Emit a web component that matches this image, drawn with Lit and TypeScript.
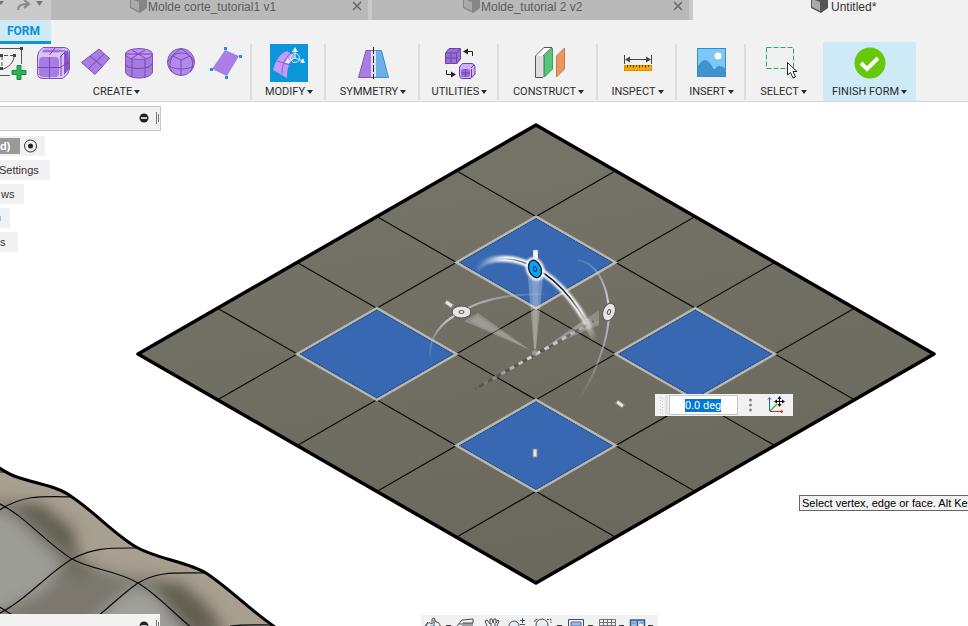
import { LitElement, html, svg, css } from "lit";
import { customElement } from "lit/decorators.js";

const ORIGIN = [536, 125];
const at = (a: number, b: number) =>
  `${(ORIGIN[0] + (a - b) * 79.6).toFixed(1)},${(ORIGIN[1] + (a + b) * 45.8).toFixed(1)}`;
const face = (a: number, b: number, inset = 0) =>
  [
    at(a + inset, b + inset),
    at(a + 1 - inset, b + inset),
    at(a + 1 - inset, b + 1 - inset),
    at(a + inset, b + 1 - inset),
  ].join(" ");

const cube = svg`
  <path d="M0 -3 L9 -6 L17 -3 V8 L10 13 L0 8Z" fill="currentColor"/>
  <path class="cube-face" d="M1 -1 L9 2 V11 L1 7Z"/>`;

const icons: Record<string, unknown> = {
  sketch: svg`
    <g fill="none" stroke="#555" stroke-width="1">
      <path d="M0 4.500H33 M33.500 6V20 M0 31.500H22"/>
      <path d="M14 12V25 M16 11.500H25" stroke-dasharray="4 2"/>
      <path d="M26 13C25 19 21 23 15 25"/>
    </g>
    <g fill="#444"><path d="M32 3h3v3h-3z M12 10h3v3h-3z M25 10h3v3h-3z M12 23h3v3h-3z"/></g>
    <path d="M29 21.500h4v5h5v4h-5v5h-4v-5h-5v-4h5z" fill="#2eb457" stroke="#138c3a"/>`,
  box: svg`
    <path d="M12 3.500H33Q38.500 4 38.500 9V25Q38 30 32 34.500H11Q6.500 34 6.500 29V12Q7 7 12 3.500Z" fill="#d9c3f8" stroke="#7d55b5"/>
    <path d="M14 4H32L28 9H10Z" fill="#c7a0fb"/>
    <path d="M33 9L37 6Q38 10 38 25L33 31Z" fill="#8557c6"/>
    <rect x="8" y="13" width="20" height="20" rx="4" fill="#a97be5"/>
    <path d="M18.500 13V34 M7 23.500H29L38 18 M18.500 11L24 4 M12 7H35 M29 13L34 8 M30 12V32" fill="none" stroke="#7546ad"/>`,
  plane: svg`
    <path d="M25 5L35.500 14.500L21 30.500L7.500 18.500Z" fill="#aa7de5" stroke="#7b50b3"/>
    <path d="M16 12L28 22 M14 25L30 10" fill="none" stroke="#7546ad"/>`,
  cylinder: svg`
    <path d="M8.500 10V28C10 36 34 36 35.500 28V10Z" fill="#a67be0" stroke="#7d55b5"/>
    <ellipse cx="22" cy="10" rx="13.500" ry="5.500" fill="#bd91f5" stroke="#7d55b5"/>
    <path d="M15 6L28 14 M28 6L15 14 M8 10H35 M15 15V33 M28 15V33 M8 20C10 26 33 26 35 20" fill="none" stroke="#7448ab"/>`,
  sphere: svg`
    <circle cx="21" cy="18" r="13.500" fill="#b28aed" stroke="#7d55b5"/>
    <path d="M13 12L21 16L30 12 M21 16V31 M13 12C9 18 9 23 12 28 M30 12C34 18 33 24 30 28 M13 12C16 8 27 8 30 12 M21 5C15 8 10 14 8 18 M21 5C27 8 32 13 34 18 M9 22C15 26 28 26 33 22" fill="none" stroke="#774db0"/>`,
  facet: svg`
    <path d="M22 6L36 12L24 32L9 25Z" fill="#a97ee5"/>
    <path d="M21 3h3v3h-3z M36 11h3v3h-3z M7 24h3v3h-3z M22 32h3v3h-3z" fill="#1b94e8"/>`,
  modify: svg`
    <rect width="38" height="38" fill="#0b96dc"/>
    <path d="M3 26C6 15 11 9 17 7L26 13C19 17 17 24 17 34Z" fill="#c49bfb"/>
    <path d="M7 17L20 21 M12 30C12 20 15 14 21 9" fill="none" stroke="#8a62c8"/>
    <path d="M25 14V7 M25 14L18 17 M25 14L33 17" stroke="#e2f3ff" fill="none"/>
    <circle cx="25" cy="14" r="4.500" fill="none" stroke="#e2f3ff"/>
    <path d="M25 3l3 5h-6z M15 19l3-5 2 5z M35 19l-5 0 3-5z" fill="#e2f3ff"/>`,
  symmetry: svg`
    <path d="M12 6.500H19V33.500H4.500Z" fill="#a97de5" stroke="#8256bb"/>
    <path d="M20 6.500H27.500L34.500 33.500H20Z" fill="#68b0e7" stroke="#468fc9"/>
    <rect x="17" y="7" width="5" height="26" fill="#dfe3ea"/>
    <path d="M19.500 3V35" stroke="#222" stroke-dasharray="7 2"/>`,
  utilities: svg`
    <path d="M4.500 9L8 4.500H19.500V15L16 19.500H4.500Z" fill="#9a6cda" stroke="#6d469f"/>
    <path d="M5 9H15.500V19 M15.500 9L19 5 M10 9V19 M5 14H16" fill="none" stroke="#6d469f"/>
    <path d="M21.500 19.500H31Q34 20 34 23V30L30 34.500H21Q18.500 34 18.500 31V23Z" fill="#d0b0f6" stroke="#6d469f"/>
    <rect x="20" y="25" width="9" height="8" rx="2" fill="#9b6cdc"/><path d="M24.500 25V33 M20 29H29 M30 24L33 21 M30.500 25V33" stroke="#6d469f" fill="none"/>
    <path d="M31.500 12V7.500H26 M5.500 26V30.500H11" fill="none" stroke="#222"/>
    <path d="M22 7.500l5-3v6z M15 30.500l-5-3v6z" fill="#222"/>`,
  construct: svg`
    <path d="M5.500 12L14 3.500H22L13 12V33.500H5.500Z" fill="#fff" stroke="#555"/>
    <path d="M6 12H13V33H6Z" fill="#ddd"/>
    <path d="M14.500 12L22.500 4V25L14.500 33Z" fill="#55c67c" stroke="#37a35b"/>
    <path d="M26.500 12L34.500 4V25L26.500 33Z" fill="#e69762" stroke="#cc7c48"/>`,
  inspect: svg`
    <path d="M5.500 11V20 M32.500 11V20 M7 15.500H31" stroke="#444" fill="none"/>
    <path d="M6 15.500l5-3v6z M32 15.500l-5-3v6z" fill="#444"/>
    <rect x="5.500" y="21.500" width="27" height="5" fill="#fba609" stroke="#db8d00"/>
    <path d="M8.500 21v3 M11.500 21v2 M14.500 21v3 M17.500 21v2 M20.500 21v3 M23.500 21v2 M26.500 21v3 M29.500 21v2" stroke="#6d4500"/>`,
  insert: svg`
    <rect x="4.500" y="4.500" width="28" height="28" fill="#7cc8fb" stroke="#3a8bca"/>
    <circle cx="25" cy="12" r="3.500" fill="#fffbd5"/>
    <path d="M5 22Q9 16 12 16Q16 16 20 24Q21 26 23 24Q26 20 28 23Q30 21 32 25V32H5Z" fill="#3f94ce"/>`,
  select: svg`
    <rect x="1.500" y="3.500" width="27" height="21" fill="none" stroke="#27b152" stroke-dasharray="5 2"/>
    <path d="M22.500 18.500V31L25.500 28.500L28 34L30.500 33L28 27.500H32Z" fill="#fff" stroke="#222"/>`,
  finish: svg`
    <circle cx="19" cy="19" r="15.500" fill="#66c808"/>
    <path d="M10 19L16 25L27 14" fill="none" stroke="#fff" stroke-width="4"/>`,
};

const icon = (name: string, width = 38) =>
  html`<svg class="icon" width=${width} height="38" aria-hidden="true">${icons[name]}</svg>`;

const groups = [
  { id: "modify", label: "MODIFY" },
  { id: "symmetry", label: "SYMMETRY" },
  { id: "utilities", label: "UTILITIES" },
  { id: "construct", label: "CONSTRUCT" },
  { id: "inspect", label: "INSPECT" },
  { id: "insert", label: "INSERT" },
  { id: "select", label: "SELECT" },
  { id: "finish", label: "FINISH FORM" },
];

@customElement("document-tabs")
class DocumentTabs extends LitElement {
  static styles = css`
    :host { display: flex; height: 20px; background: #cacaca; color: #5c5c5c; font: 12px/14px "Liberation Sans", Arial, sans-serif; overflow: hidden; }
    .history { flex: 0 0 51px; }
    .tab { box-sizing: border-box; flex: 0 0 317px; display: flex; padding-left: 79px; margin-right: 4px; background: #b9b9b9; }
    .second { padding-left: 91px; }
    .open { flex: 1 0 200px; margin: 0; padding-left: 118px; background: #f1f1f1; color: #333; }
    .cube { flex: 0 0 18px; color: #858585; height: 14px; }
    .cube-face { fill: #aaa; }
    .open .cube { flex-basis: 20px; color: #555; }
    .name { flex: 1; white-space: nowrap; }
    button { width: 22px; height: 14px; padding: 0; border: 0; background: none; }
  `;
  private tab(name: string, kind: string) {
    return html`<div class="tab ${kind}">
      <svg class="cube" width="18" height="14" aria-hidden="true">${cube}</svg>
      <span class="name">${name}</span>
      ${kind === "open" ? "" : html`<button aria-label="Close">
        <svg width="22" height="14"><path d="M7 2L15 10M15 2L7 10" stroke="#666" stroke-width="1.500"/></svg>
      </button>`}
    </div>`;
  }
  render() {
    return html`
      <svg class="history" width="51" height="20" aria-hidden="true">
        <path d="M-2 1H4L1 5Z M36 1H43L39.500 6Z" fill="#777"/>
        <path d="M18 10C18 5 22 4 27 4M24 0L29 4L24 8" fill="none" stroke="#888" stroke-width="2"/>
      </svg>
      ${this.tab("Molde corte_tutorial1 v1", "first")}
      ${this.tab("Molde_tutorial 2 v2", "second")}
      ${this.tab("Untitled*", "open")}`;
  }
}

@customElement("tool-ribbon")
class ToolRibbon extends LitElement {
  static styles = css`
    :host { display: block; height: 81px; background: #f1f1f1; border-bottom: 1px solid #d6d6d6; overflow: hidden; }
    .workspaces { height: 22px; }
    .workspace { box-sizing: border-box; display: block; width: 51px; height: 24px; padding: 0 13px 0 7px; border: 0; border-bottom: 3px solid #0c96d9; background: #cdeaf6; color: #0a92d4; font: bold 12px/20px Roboto, sans-serif; }
    .tools { display: flex; height: 59px; }
    .group { box-sizing: border-box; flex: none; display: flex; flex-direction: column; align-items: center; padding: 2px 0 0 2px; }
    .group:not(.select, .finish) { border-right: 2px solid; border-image: linear-gradient(#f1f1f1 4px, #dcdcdc 4px, #dcdcdc 56px, #f1f1f1 56px) 2; }
    .create { width: 271px; margin-left: -19px; }
    .row { display: flex; align-self: flex-end; margin-right: 4px; }
    .modify { width: 74px; }
    .symmetry { width: 94px; }
    .utilities, .inspect { width: 79px; }
    .construct { width: 99px; }
    .insert { width: 69px; }
    .select { width: 77px; padding-right: 4px; }
    .finish { width: 93px; padding-left: 0; background: #cdeaf6; }
    .icon { display: block; }
    button { padding: 0; border: 0; background: none; }
    .menu { display: flex; align-items: center; gap: 2px; margin-top: 3px; color: #2c2c2c; font: 11px/14px Roboto, sans-serif; white-space: nowrap; }
    .menu::after { content: ""; border: 3px solid transparent; border-top: 4px solid #2c2c2c; border-bottom: 0; }
  `;
  render() {
    return html`
      <div class="workspaces"><button class="workspace">FORM</button></div>
      <div class="tools">
        <div class="group create">
          <div class="row">
            ${["sketch", "box", "plane", "cylinder", "sphere", "facet"].map(
              (n) => html`<button aria-label=${n}>${icon(n, 43)}</button>`)}
          </div>
          <button class="menu">CREATE</button>
        </div>
        ${groups.map((g) => html`<div class="group ${g.id}">
          <button aria-label=${g.id}>${icon(g.id)}</button>
          <button class="menu">${g.label}</button>
        </div>`)}
      </div>`;
  }
}

@customElement("model-scene")
class ModelScene extends LitElement {
  static styles = css`
    :host { display: block; }
    .scene { display: block; width: 100%; height: 100%; }
    .grid { stroke: #0c0c0a; stroke-width: 1.2; }
    .picked { fill: #3868b1; stroke: #b9b7b1; stroke-width: 2.5; }
    .picked-edge { fill: none; stroke: #173467; stroke-width: 1; stroke-dasharray: 1 1; }
    .wire { fill: none; stroke: #0a0a0a; stroke-width: 1.2; }
  `;
  render() {
    const n = [1, 2, 3, 4];
    const picked = [[1, 1], [1, 3], [3, 1], [3, 3]];
    const ridge = "M-5 465C5 472 12 476 20 478C34 483 58 486 72 497C96 513 116 536 138 548C158 559 188 562 206 573C230 589 250 610 275 627";
    return html`<svg class="scene" role="img" aria-label="Model view">
      <defs>
        <linearGradient id="slab" x2="0.3" y2="1"><stop stop-color="#78756a"/><stop offset="1" stop-color="#6b685e"/></linearGradient>
        <clipPath id="body"><path d="${ridge}V640H-5Z"/></clipPath>
        <filter id="soft" x="-50%" y="-50%" width="200%" height="200%"><feGaussianBlur stdDeviation="7"/></filter>
        <filter id="glow" x="-20%" y="-20%" width="140%" height="140%"><feGaussianBlur stdDeviation="1"/></filter>
        <linearGradient id="arcA" gradientUnits="userSpaceOnUse" x1="474" y1="270" x2="596" y2="340">
          <stop stop-color="#fff" stop-opacity="0"/><stop offset=".15" stop-color="#fff"/><stop offset=".8" stop-color="#fff"/><stop offset="1" stop-color="#fff" stop-opacity="0"/></linearGradient>
        <linearGradient id="arcDark" gradientUnits="userSpaceOnUse" x1="474" y1="270" x2="596" y2="340">
          <stop offset=".1" stop-color="#222" stop-opacity="0"/><stop offset=".35" stop-color="#222"/><stop offset=".65" stop-color="#222"/><stop offset=".9" stop-color="#222" stop-opacity="0"/></linearGradient>
        <linearGradient id="arcB" gradientUnits="userSpaceOnUse" x1="430" y1="362" x2="550" y2="294">
          <stop stop-color="#ccd" stop-opacity="0"/><stop offset=".3" stop-color="#ccd"/><stop offset="1" stop-color="#ccd" stop-opacity="0"/></linearGradient>
        <linearGradient id="arcC" gradientUnits="userSpaceOnUse" x1="0" y1="258" x2="0" y2="400">
          <stop stop-color="#ccd" stop-opacity=".1"/><stop offset=".3" stop-color="#ccd"/><stop offset="1" stop-color="#ccd" stop-opacity="0"/></linearGradient>
        <linearGradient id="axis" gradientUnits="userSpaceOnUse" x1="475" y1="389" x2="594" y2="321">
          <stop stop-color="#ddd" stop-opacity=".1"/><stop offset=".5" stop-color="#ddd"/><stop offset="1" stop-color="#ddd" stop-opacity=".4"/></linearGradient>
      </defs>
      <g transform="translate(0 -102)">
        <g clip-path="url(#body)">
          <path d="M-5 460H290V640H-5Z" fill="#a79f90"/>
          <g filter="url(#soft)">
            <path d="M-20 500L30 503L66 530L84 560L112 574L160 578L205 600L232 640L240 660H-20Z" fill="#7b786e"/>
            <path d="M10 502L42 504L74 530L78 556L66 552Z" fill="#625e51"/>
            <path d="M62 556L90 566L88 580L66 574Z" fill="#6f6b5f"/>
            <path d="M150 584L182 582L220 622L200 640Z" fill="#625e51"/>
            <path d="M-20 506L14 518L62 564L44 590L-20 620Z" fill="#9d9d98"/>
            <path d="M92 622L130 588L155 594L188 640H90Z" fill="#a0a09b"/>
          </g>
          <path class="wire" d="M0 472H5M-2 511C22 495 40 496 72 497M-2 503C24 515 46 543 72 559C92 570 116 570 138 583C158 595 172 612 192 628M-2 614C24 602 47 574 72 559C94 547 110 548 138 548M98 616C112 605 122 594 138 583C158 571 176 573 206 573M-2 606L14 616M230 626C244 624 260 625 275 625"/>
        </g>
        <path d=${ridge} fill="none" stroke="#000" stroke-width="3"/>

        <polygon points="${at(0, 0)} ${at(5, 0)} ${at(5, 5)} ${at(0, 5)}" fill="url(#slab)"/>
        ${n.map((i) => svg`<polyline class="grid" points="${at(i, 0)} ${at(i, 5)}"/><polyline class="grid" points="${at(0, i)} ${at(5, i)}"/>`)}
        ${picked.map(([a, b]) => svg`<polygon class="picked" points=${face(a, b)}/><polygon class="picked-edge" points=${face(a, b, 0.02)}/>`)}
        <polygon points="${at(0, 0)} ${at(5, 0)} ${at(5, 5)} ${at(0, 5)}" fill="none" stroke="#000" stroke-width="3.500" stroke-linejoin="round"/>

        <g fill="#fff">
          <path d="M528 278H543L536 349H534Z" fill-opacity=".26"/><path d="M532 280H539L536 349H534Z" fill-opacity=".14"/>
          <path d="M464 321L478 313L530 350Z" fill-opacity=".22"/><path d="M470 321L477 316L530 350Z" fill-opacity=".12"/>
          <path d="M599 310V325L543 349Z" fill-opacity=".22"/><path d="M586 318L599 322L543 349Z" fill-opacity=".12"/>
        </g>
        <path d="M475 389L594 321" stroke="#333" stroke-opacity=".4" stroke-width="3"/>
        <path d="M475 389L594 321" stroke="url(#axis)" stroke-width="3" stroke-dasharray="5 5"/>
        <circle cx="535" cy="353" r="3" fill="#aaa" fill-opacity=".7"/>
        <g fill="none">
          <path d="M431 362C426 337 443 321 461 312C486 296 520 294 550 294" stroke="url(#arcB)" stroke-width="2"/>
          <path d="M578 260C600 264 608 290 609 312C609 340 594 378 578 400" stroke="url(#arcC)" stroke-width="2"/>
          <path d="M476 269C488 255 516 256 535 268C562 282 583 312 595 340" stroke="url(#arcA)" stroke-width="6" filter="url(#glow)"/>
          <path d="M476 269C488 255 516 256 535 268C562 282 583 312 595 340" stroke="url(#arcDark)" stroke-width="1.500"/>
        </g>
        <rect x="533" y="250" width="5" height="9" fill="#fff" stroke="#777" stroke-width=".5"/>
        <g transform="translate(535 269) rotate(-22)">
          <ellipse rx="9" ry="12" fill="#fff" filter="url(#glow)"/>
          <ellipse rx="6" ry="9" fill="#08a4f7" stroke="#16293b" stroke-width="1.500"/><ellipse rx="1.500" ry="2.500" fill="none" stroke="#073b61"/>
        </g>
        <g fill="#e5e5e3" stroke="#555" stroke-width="1">
          <ellipse cx="461.500" cy="312" rx="9.500" ry="6"/><ellipse cx="461.500" cy="312" rx="2.500" ry="1.500"/>
          <g transform="translate(609 312) rotate(20)"><ellipse rx="6" ry="9"/><ellipse rx="1.500" ry="2.500"/></g>
        </g>
        <g fill="#e8e8e8" stroke="#8a8880">
          <rect x="-4" y="-2" width="8" height="4" transform="translate(449 304) rotate(35)"/>
          <rect x="-4" y="-2" width="8" height="4" transform="translate(620 404) rotate(35)"/>
          <rect x="533" y="449" width="4" height="8"/>
        </g>
      </g>
    </svg>`;
  }
}

@customElement("app-root")
class AppRoot extends LitElement {
  static styles = css`
    :host { display: flex; flex-direction: column; height: 100vh; overflow: hidden; background: #fff; color: #333; font: 11px/20px "Liberation Sans", Arial, sans-serif; }
    .viewport { flex: 1; position: relative; overflow: hidden; min-height: 0; }
    model-scene { position: absolute; inset: 0; }
    .browser { position: relative; display: flex; flex-direction: column; align-items: flex-start; gap: 4px; padding-top: 4px; }
    .panel { box-sizing: border-box; display: flex; justify-content: flex-end; width: 161px; height: 25px; margin-bottom: 1px; background: #f2f2f2; border: 1px solid #c7c7c7; border-left: 0; }
    .panel svg { display: block; }
    .node { display: flex; align-items: center; height: 20px; background: #f1f1f1; }
    .root-name { padding-right: 10px; margin-right: 3px; background: #999; color: #fff; font-weight: bold; line-height: 16px; }
    .root { padding-right: 7px; }
    .settings { padding-right: 11px; margin-left: -1px; }
    .views { padding: 0 10px 0 1px; }
    .origin { width: 10px; }
    .sliver { width: 1px; height: 5px; background: #7fcdf0; }
    .bodies { padding-right: 12px; }
    .comments { position: absolute; left: 0; bottom: 0; width: 160px; height: 12px; margin: 0; overflow: hidden; border: 0; }
    .value { position: absolute; left: 655px; top: 292px; display: flex; align-items: center; height: 22px; width: 138px; background: #f1f1f1; }
    .value input { box-sizing: border-box; width: 69px; height: 20px; padding: 0 15px; border: 1px solid #c8c8c8; background: #fff; font: 11px/16px Roboto, sans-serif; outline: 0; }
    .value input::selection { background: #0078d7; color: #fff; }
    .value button { padding: 0; border: 0; background: none; height: 22px; }
    .hint { position: absolute; left: 799px; top: 393px; padding: 0 2px; border: 1px solid #666; background: #f2f2f2; color: #000; font: 11px/14px "Liberation Sans", sans-serif; white-space: nowrap; }
    .nav { position: absolute; left: 421px; bottom: 0; width: 237px; height: 11px; background: #f1f1f1; overflow: hidden; }
    .nav svg { display: block; }
  `;
  firstUpdated() {
    const field = this.renderRoot.querySelector("input");
    field?.focus();
    field?.select();
  }
  private panelMarks(y: number) {
    return html`<svg width="24" height="23" aria-hidden="true">
      <circle cx="8" cy=${y} r="4.500" fill="#222"/><path d="M5 ${y}H11" stroke="#fff" stroke-width="1.500"/>
      <path d="M20.500 ${y - 6}V${y + 6}M22.500 ${y - 4}V${y + 4}" stroke="#777"/></svg>`;
  }
  render() {
    return html`
      <document-tabs></document-tabs>
      <tool-ribbon></tool-ribbon>
      <main class="viewport">
        <model-scene></model-scene>
        <div class="browser">
          <div class="panel">${this.panelMarks(11)}</div>
          <div class="node root"><span class="root-name">d)</span>
            <svg width="15" height="16" aria-hidden="true"><circle cx="7.500" cy="8" r="6" fill="none" stroke="#333"/><circle cx="7.500" cy="8" r="2.500" fill="#222"/></svg>
          </div>
          <div class="node settings">Settings</div>
          <div class="node views">ws</div>
          <div class="node origin"><span class="sliver"></span></div>
          <div class="node bodies">s</div>
        </div>
        <div class="panel comments">${this.panelMarks(12)}</div>
        <div class="value">
          <svg width="14" height="22" aria-hidden="true">
            <path d="M5.500 3V20M7.500 4V20" stroke="#ccc" stroke-dasharray="1 2"/><path d="M11.500 1V21" stroke="#ddd" stroke-width="2"/></svg>
          <input aria-label="Angle" value="0.0 deg">
          <button aria-label="More"><svg width="24" height="22"><g fill="#888"><circle cx="12.500" cy="6" r="1.500"/><circle cx="12.500" cy="11" r="1.500"/><circle cx="12.500" cy="16" r="1.500"/></g></svg></button>
          <button aria-label="Transform origin"><svg width="28" height="22" fill="none">
            <path d="M7.500 17V4M6 5.500L7.500 3.500L9 5.500" stroke="#1766b5"/>
            <path d="M8 17.500H21M19 16L21 17.500L19 19" stroke="#e02020"/>
            <path d="M8 17L15 10" stroke="#3dbb2b" stroke-width="1.500"/>
            <path d="M13 7.500H22M17.500 3V12" stroke="#111"/><path d="M17.500 2l2 3h-4zM17.500 13l2-3h-4zM12 7.500l3-2v4zM23 7.500l-3-2v4z" fill="#111"/>
          </svg></button>
        </div>
        <div class="hint">Select vertex, edge or face. Alt Ke</div>
        <nav class="nav" aria-label="View controls">
          <svg width="237" height="11" fill="none" stroke="#454d57">
            <path d="M5 11C6 8 9 7 11 9V4L13 3L15 7C18 7 19 9 19 11M7 7L4 11M13 5V11"/><path d="M9 11H13" stroke="#1685d8"/>
            <path d="M36 11L41 5L52 4V8H42M38 9H52M41 11H52"/>
            <path d="M66 11L64 6L66 5L69 9V4H71L72 8L73 4H75V8L77 5L78 6L76 11M70 8V11M74 8V11"/>
            <circle cx="93" cy="11" r="5" fill="#dfeef2"/><path d="M99 5.500H104M101.500 3V8M99 9.500H104"/>
            <circle cx="121" cy="10" r="6" fill="#dfeef2"/><path d="M114 7V4.500H117M126 4.500H130V8" stroke-dasharray="2 1"/>
            <path d="M147.500 11V4.500H162.500V11"/><path d="M150 11V7H160V11Z" fill="#9dbce5" stroke="#47709f"/>
            <path d="M178.500 11V4.500H194.500V11M178 7.500H195M178 10.500H195M182.500 5V11M186.500 5V11M190.500 5V11" stroke="#6a7077"/>
            <path d="M209.500 11V5H216.500V11M216.500 5H223.500V11" fill="#9dbce5" stroke="#315f8e" stroke-width="1.500"/><path d="M211 8H215M218 8H222" stroke="#5b88bb"/>
            <path d="M25 10.500H30M136 10.500H141M167 10.500H172M198 10.500H203M227 10.500H232" stroke="#333"/>
          </svg>
        </nav>
      </main>`;
  }
}
